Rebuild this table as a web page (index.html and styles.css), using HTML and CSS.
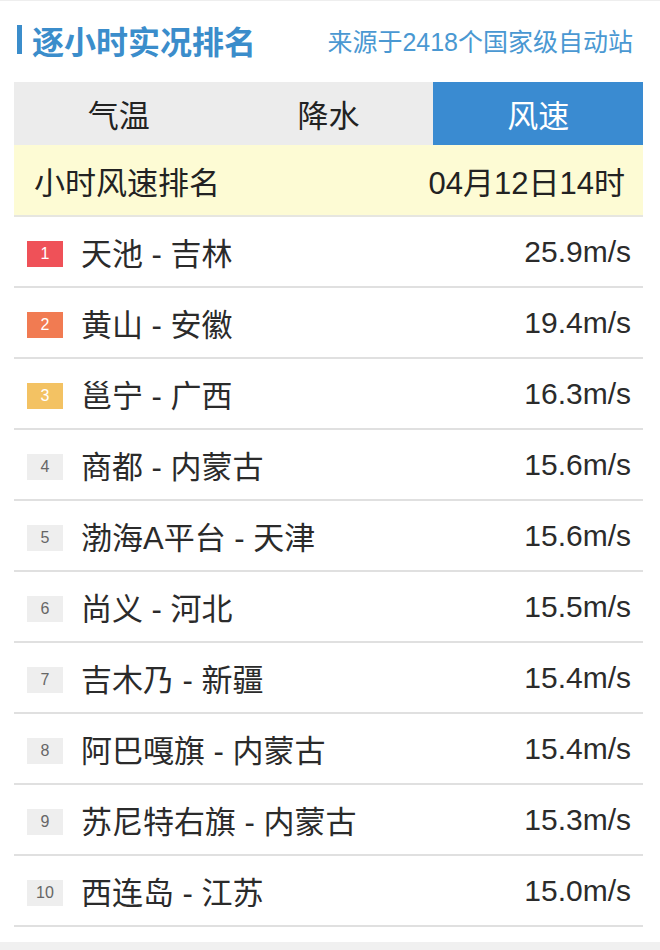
FILE: index.html
```html
<!DOCTYPE html>
<html lang="zh">
<head>
<meta charset="utf-8">
<link rel="stylesheet" href="styles.css">
</head>
<body>
<div class="page">
  <div class="head">
    <div class="title"><span class="bar"></span>逐小时实况排名</div>
    <div class="source">来源于2418个国家级自动站</div>
  </div>
  <div class="panel">
    <div class="tabs">
      <div class="tab">气温</div>
      <div class="tab">降水</div>
      <div class="tab active">风速</div>
    </div>
    <div class="sub">
      <span>小时风速排名</span>
      <span>04月12日14时</span>
    </div>
    <ul class="list">
      <li class="row"><span class="rank r1">1</span><span class="name">天池 - 吉林</span><span class="val">25.9m/s</span></li>
      <li class="row"><span class="rank r2">2</span><span class="name">黄山 - 安徽</span><span class="val">19.4m/s</span></li>
      <li class="row"><span class="rank r3">3</span><span class="name">邕宁 - 广西</span><span class="val">16.3m/s</span></li>
      <li class="row"><span class="rank">4</span><span class="name">商都 - 内蒙古</span><span class="val">15.6m/s</span></li>
      <li class="row"><span class="rank">5</span><span class="name">渤海A平台 - 天津</span><span class="val">15.6m/s</span></li>
      <li class="row"><span class="rank">6</span><span class="name">尚义 - 河北</span><span class="val">15.5m/s</span></li>
      <li class="row"><span class="rank">7</span><span class="name">吉木乃 - 新疆</span><span class="val">15.4m/s</span></li>
      <li class="row"><span class="rank">8</span><span class="name">阿巴嘎旗 - 内蒙古</span><span class="val">15.4m/s</span></li>
      <li class="row"><span class="rank">9</span><span class="name">苏尼特右旗 - 内蒙古</span><span class="val">15.3m/s</span></li>
      <li class="row"><span class="rank">10</span><span class="name">西连岛 - 江苏</span><span class="val">15.0m/s</span></li>
    </ul>
  </div>
  <div class="foot"></div>
</div>
</body>
</html>
```
FILE: styles.css
```css
html, body {
  margin: 0;
  padding: 0;
  background: #fff;
}
body {
  font-family: "Liberation Sans", "Noto Sans CJK SC", sans-serif;
  color: #333;
  width: 660px;
  height: 950px;
  overflow: hidden;
}
.page {
  display: flex;
  flex-direction: column;
  height: 950px;
  border-top: 1px solid #eee;
  box-sizing: border-box;
}
.head {
  height: 81px;
  display: flex;
  align-items: center;
  justify-content: space-between;
  padding: 0 27px 0 17px;
}
.title {
  display: flex;
  align-items: center;
  font-size: 32px;
  font-weight: bold;
  color: #3b8dcb;
  margin-top: -4px;
}
.bar {
  width: 5px;
  height: 29px;
  background: #3b8dcb;
  margin-right: 10px;
}
.source {
  font-size: 25px;
  color: #4a98d2;
  margin-top: -4px;
}
.panel {
  margin-left: 14px;
  width: 629px;
}
.tabs {
  display: grid;
  grid-template-columns: 1fr 1fr 1fr;
  height: 63px;
  background: #ececec;
}
.tab {
  display: flex;
  align-items: center;
  justify-content: center;
  font-size: 31px;
  color: #222;
}
.tab.active {
  background: #3a8bd1;
  color: #fff;
}
.sub {
  height: 70px;
  background: #fdfbd4;
  display: flex;
  align-items: center;
  justify-content: space-between;
  padding: 0 18px 0 20px;
  font-size: 31px;
  color: #222;
  border-bottom: 2px solid #e6e6e0;
}
.list {
  list-style: none;
  margin: 0;
  padding: 0;
}
.row {
  height: 69px;
  border-bottom: 2px solid #e0e0e0;
  display: flex;
  align-items: center;
  padding: 0 12px 0 13px;
}
.rank {
  width: 36px;
  height: 26px;
  display: flex;
  align-items: center;
  justify-content: center;
  font-size: 16px;
  color: #666;
  background: #eeeeee;
  margin-right: 18px;
  margin-top: 4px;
}
.rank.r1 { background: #ef5158; color: #fff; }
.rank.r2 { background: #f17b52; color: #fff; }
.rank.r3 { background: #f3c263; color: #fff; }
.name {
  flex: 1;
  font-size: 31px;
  color: #2b2b2b;
}
.val {
  font-size: 30px;
  color: #2b2b2b;
}
.foot {
  margin-top: auto;
  height: 8px;
  background: #f0f0f0;
}
```
